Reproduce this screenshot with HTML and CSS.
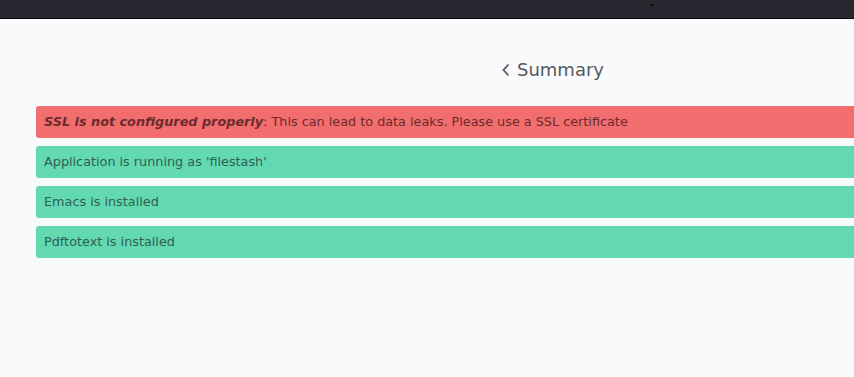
FILE: index.html
```html
<!doctype html>
<html lang="en">
    <head>
        <meta charset="UTF-8" />
        <meta name="viewport" content="width=device-width, initial-scale=1.0" />
        <title>Summary</title>
        <link rel="stylesheet" href="styles.css">
    </head>
    <body>
        <div class="topbar">
            <span class="topbar-dot"></span>
        </div>

        <div class="page">
            <div class="container">
                <h2 class="title">
                    <svg class="chevron" width="10" height="14" viewBox="0 0 10 14">
                        <path d="M7.5 1.5 L2.5 7 L7.5 12.5" fill="none" stroke="#555a60" stroke-width="1.8" />
                    </svg>
                    Summary
                </h2>

                <div class="check check-error">
                    <strong>SSL is not configured properly</strong>: This can lead to data leaks. Please use a SSL certificate
                </div>
                <div class="check check-ok">Application is running as 'filestash'</div>
                <div class="check check-ok">Emacs is installed</div>
                <div class="check check-ok">Pdftotext is installed</div>
            </div>
        </div>
    </body>
</html>
```

FILE: styles.css
```css
/* General Styles */
body {
    font-family: "DejaVu Sans", sans-serif;
    margin: 0;
    padding: 0;
    background-color: #f9fafc;
    overflow: hidden;
}

.topbar {
    height: 18px;
    background-color: #29272f;
    border-bottom: 1px solid #050505;
    position: relative;
}

.topbar-dot {
    position: absolute;
    left: 650px;
    top: 4px;
    width: 4px;
    height: 2px;
    background-color: #141318;
}

.page {
    padding-left: 36px;
}

.container {
    width: 1033px;
}

/* Title */
.title {
    display: flex;
    justify-content: center;
    align-items: center;
    gap: 6px;
    margin: 0;
    padding-top: 36px;
    height: 28px;
    font-size: 18px;
    font-weight: normal;
    color: #555a60;
    margin-bottom: 23px;
}

.chevron {
    margin-top: 1px;
}

/* Checks */
.check {
    height: 32px;
    line-height: 32px;
    padding: 0 8px;
    border-radius: 3px;
    font-size: 12.8px;
    margin-bottom: 8px;
    white-space: nowrap;
}

.check strong {
    font-style: italic;
}

.check-error {
    background-color: #f26e6e;
    color: #6b2a2e;
}

.check-ok {
    background-color: #63d9b1;
    color: #2f5f52;
}
```
